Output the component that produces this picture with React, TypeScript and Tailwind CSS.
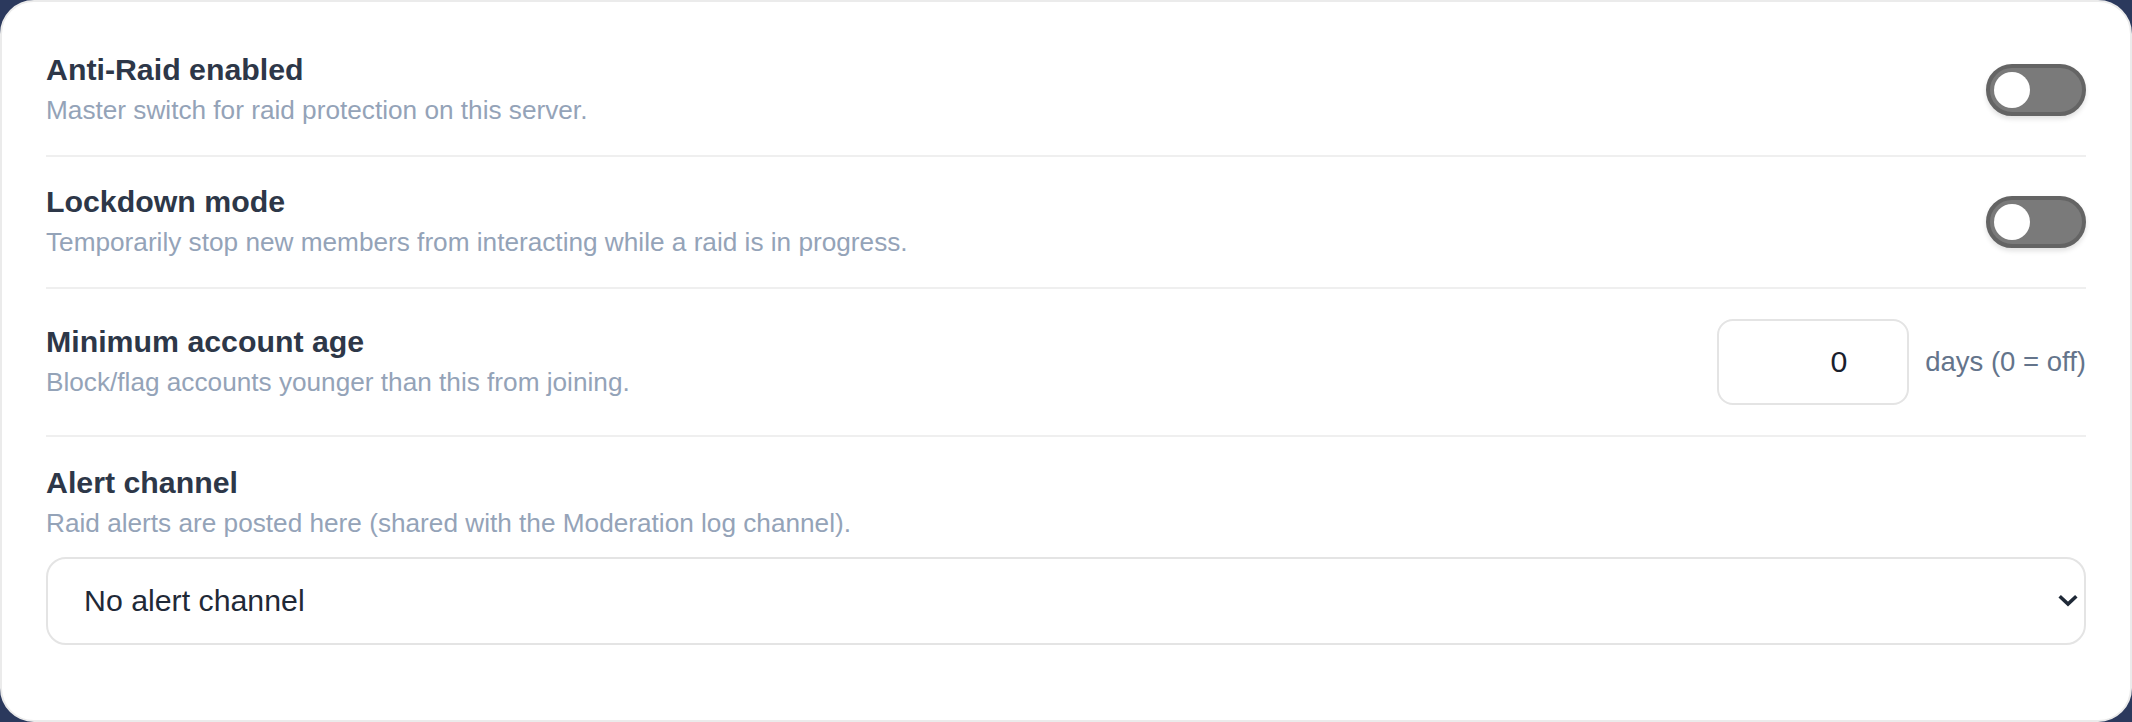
import React, { useState } from "react";

function Toggle({ on, onChange }: { on: boolean; onChange: (v: boolean) => void }) {
  return (
    <button
      type="button"
      role="switch"
      aria-checked={on}
      onClick={() => onChange(!on)}
      className={`relative flex h-[52px] w-[100px] shrink-0 items-center rounded-full border-[4px] border-[#646464] bg-[#7a7a7a] px-[4px] shadow-[0_3px_5px_rgba(0,0,0,0.12)] ${
        on ? "justify-end" : "justify-start"
      }`}
    >
      <span className="h-[36px] w-[36px] rounded-full bg-white" />
    </button>
  );
}

function RowText({ title, desc }: { title: string; desc: string }) {
  return (
    <div className="flex flex-col">
      <h3 className="text-[30.3px] font-bold leading-[36px] text-[#2d3748]">{title}</h3>
      <p className="mt-1 text-[26.2px] leading-[36px] text-[#94a3b8]">{desc}</p>
    </div>
  );
}

export default function App() {
  const [enabled, setEnabled] = useState(false);
  const [lockdown, setLockdown] = useState(false);
  const [minAge, setMinAge] = useState("0");

  return (
    <div className="h-[722px] w-full bg-[#2b395d] font-['Liberation_Sans',Arial,sans-serif]">
      <div className="flex h-full flex-col rounded-[34px] border-2 border-[#ebebeb] bg-white px-[44px] pt-[23px]">
        <div className="flex items-center justify-between border-b-2 border-[#efefef] py-[27px]">
          <RowText title="Anti-Raid enabled" desc="Master switch for raid protection on this server." />
          <Toggle on={enabled} onChange={setEnabled} />
        </div>

        <div className="flex items-center justify-between border-b-2 border-[#efefef] py-[27px]">
          <RowText
            title="Lockdown mode"
            desc="Temporarily stop new members from interacting while a raid is in progress."
          />
          <Toggle on={lockdown} onChange={setLockdown} />
        </div>

        <div className="flex h-[148px] items-center justify-between border-b-2 border-[#efefef]">
          <RowText title="Minimum account age" desc="Block/flag accounts younger than this from joining." />
          <div className="flex items-center gap-4">
            <input
              type="text"
              inputMode="numeric"
              value={minAge}
              onChange={(e) => {
                const val = e.target.value;
                if (val === "" || /^[0-9]+$/.test(val)) setMinAge(val);
              }}
              className="h-[86px] w-[192px] rounded-[16px] border-2 border-[#e4e4e4] bg-white pr-[60px] text-right text-[30.3px] text-[#1a202c] focus:outline-none"
            />
            <span className="text-[27.5px] text-[#64748b]">days (0 = off)</span>
          </div>
        </div>

        <div className="pt-[28px]">
          <RowText
            title="Alert channel"
            desc="Raid alerts are posted here (shared with the Moderation log channel)."
          />
          <div className="relative mt-4">
            <select className="h-[88px] w-full appearance-none rounded-[20px] border-2 border-[#e4e4e4] bg-white pl-[36px] text-[30.3px] text-[#1f2937] focus:outline-none">
              <option>No alert channel</option>
            </select>
            <svg
              className="pointer-events-none absolute right-[8px] top-1/2 h-[14px] w-[20px] -translate-y-1/2"
              viewBox="0 0 20 14"
              fill="none"
              stroke="#1f2937"
              strokeWidth="3.6"
              strokeLinecap="square"
            >
              <path d="M3 3.5 L10 10 L17 3.5" />
            </svg>
          </div>
        </div>
      </div>
    </div>
  );
}
